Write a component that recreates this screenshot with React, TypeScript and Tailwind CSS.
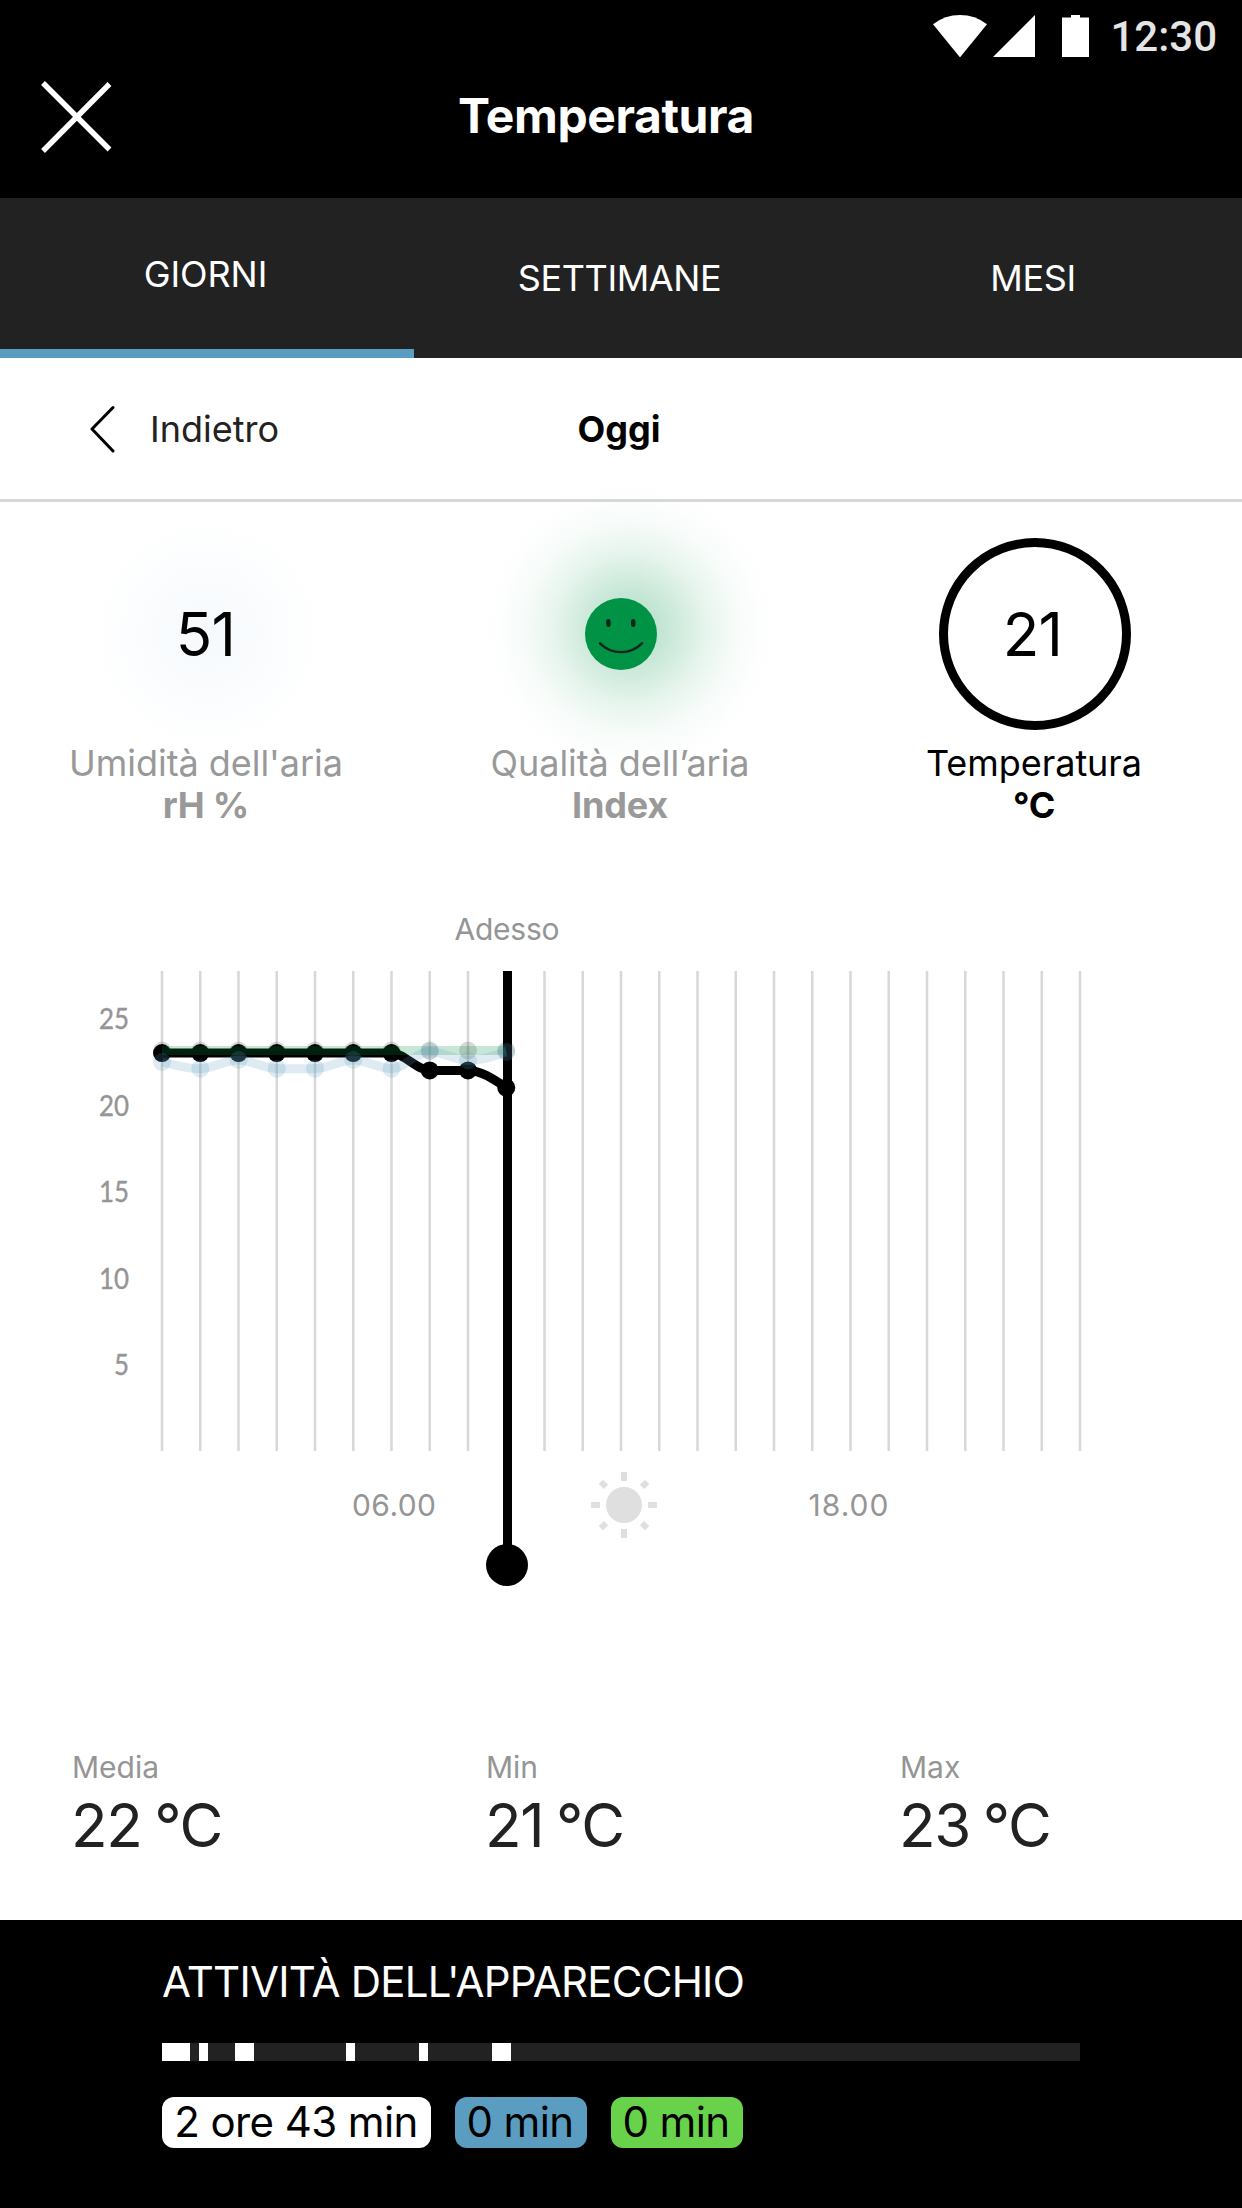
import type { ReactNode } from "react";

type Point = { x: number; y: number };

const HOUR_STEP = 38.25;
const PLOT_LEFT = 162;
const PLOT_TOP = 145;
const PLOT_BOTTOM = 625;
const NOW_X = 507.5;

const hourX = (hour: number) => PLOT_LEFT + hour * HOUR_STEP;
const tempY = (value: number) => 192.5 + (25 - value) * 17.3;

const temperature = [23, 23, 23, 23, 23, 23, 23, 22, 22, 21].map((v, i) => ({ x: hourX(i), y: tempY(v) }));
const airQuality = Array.from({ length: 10 }, (_, i) => ({ x: hourX(i), y: 224.5 }));
const humidity = [236, 242.7, 234, 242.7, 242.7, 234, 242.7, 225.5, 234.5, 226].map((y, i) => ({ x: hourX(i), y }));

/** Monotone cubic through evenly spaced points, flat at every local extreme. */
function monotonePath(points: Point[]) {
  const slope = points.map((p, i) => {
    if (i === 0 || i === points.length - 1) return null;
    const before = (p.y - points[i - 1].y) / HOUR_STEP;
    const after = (points[i + 1].y - p.y) / HOUR_STEP;
    if (before * after <= 0) return 0;
    return (2 * before * after) / (before + after);
  });
  let d = `M${points[0].x},${points[0].y}`;
  for (let i = 1; i < points.length; i++) {
    const a = points[i - 1];
    const b = points[i];
    const secant = (b.y - a.y) / HOUR_STEP;
    const m0 = slope[i - 1] ?? (3 * secant - (slope[i] ?? secant)) / 2;
    const m1 = slope[i] ?? (3 * secant - m0) / 2;
    const k = HOUR_STEP / 3;
    d += `C${a.x + k},${a.y + m0 * k} ${b.x - k},${b.y - m1 * k} ${b.x},${b.y}`;
  }
  return d;
}

function StatusBar() {
  return (
    <div className="flex h-[72px] items-center justify-end pr-[25px]">
      <svg width="156" height="42" viewBox="0 0 156 42" fill="#fff" aria-hidden>
        <path d="M0 9.2Q12 0 27 0T54 9.2L27 42.4z" />
        <path d="M60 42L102 0v42z" />
        <path d="M129 2.5h9V0h9v2.5h9V42h-27z" />
      </svg>
      <span className="ml-[21px] pt-[2px] font-[Roboto,sans-serif] text-[42px] font-medium leading-[48px] text-[#e5e5e5]">
        12:30
      </span>
    </div>
  );
}

function Header() {
  return (
    <header className="h-[198px] bg-black text-white">
      <StatusBar />
      <div className="flex h-[88px] items-center pl-[40px] pr-[142px]">
        <button type="button" aria-label="Chiudi">
          <svg width="72" height="74" viewBox="0 0 72 74" fill="none" aria-hidden>
            <path d="M3 4L69.500 70.500M69.500 5L3 72" stroke="#fff" strokeWidth="5.4" />
          </svg>
        </button>
        <h1 className="flex-1 text-center text-[48px] font-bold leading-[58px] tracking-[-0.4px]">Temperatura</h1>
      </div>
    </header>
  );
}

function Tabs() {
  return (
    <nav className="grid h-[160px] grid-cols-3 bg-[#222] text-[36px] tracking-[-0.4px] text-white">
      <button type="button" className="border-b-[9px] border-[#5b9dc0] pr-[3px] tracking-[-0.1px]">
        GIORNI
      </button>
      <button type="button" className="pr-[3px]">
        SETTIMANE
      </button>
      <button type="button" className="pr-[4px]">
        MESI
      </button>
    </nav>
  );
}

function DayPicker() {
  return (
    <div className="grid h-[144px] grid-cols-3 items-center border-b-[3px] border-[#d8d8d8] text-[36px]">
      <button type="button" className="flex items-center pl-[89px] text-[#222]">
        <svg width="26" height="48" viewBox="0 0 26 48" fill="none" aria-hidden>
          <path d="M24 2.5L3 24l21 22" stroke="#000" strokeWidth="3" strokeLinecap="round" strokeLinejoin="round" />
        </svg>
        <span className="ml-[35px]">Indietro</span>
      </button>
      <p className="pr-[4px] text-center font-bold">Oggi</p>
      <span />
    </div>
  );
}

function Smiley() {
  return (
    <svg width="72" height="72" viewBox="0 0 72 72" fill="none" aria-hidden className="relative">
      <circle cx="36" cy="36" r="36" fill="#009345" />
      <path d="M23.4 23.2v3.6M48.2 23.2v3.6" stroke="#12251a" strokeWidth="4.4" strokeLinecap="round" />
      <path d="M15 45.3C26.5 57 45.5 57 57 45.3" stroke="#12251a" strokeWidth="2.4" strokeLinecap="round" />
    </svg>
  );
}

type GaugeProps = { label: string; unit: string; active?: boolean; glow?: ReactNode; children: ReactNode };

function Gauge({ label, unit, active, glow, children }: GaugeProps) {
  return (
    <div className={active ? "flex flex-col items-center text-black" : "flex flex-col items-center text-[#999]"}>
      <div
        className={
          active
            ? "flex size-[192px] items-center justify-center rounded-full border-[9px] border-black"
            : "relative flex size-[192px] items-center justify-center"
        }
      >
        {glow}
        {children}
      </div>
      <p className="relative mt-[12px] pr-[2px] text-[36px] leading-[42px] tracking-[-0.05px]">{label}</p>
      <p className="relative pr-[2px] text-[36px] font-bold leading-[42px] tracking-[-0.2px]">{unit}</p>
    </div>
  );
}

function Gauges() {
  return (
    <section className="grid grid-cols-3 pt-[36px]">
      <Gauge
        label="Umidità dell'aria"
        unit="rH %"
        glow={
          <div className="absolute -inset-[24px] bg-[radial-gradient(closest-side,rgba(91,157,210,0.055)_10%,rgba(91,157,210,0.03)_45%,rgba(91,157,210,0.01)_75%,rgba(91,157,210,0))]" />
        }
      >
        <span className="relative pr-[3px] text-[60px] leading-[74px] tracking-[-0.8px] text-black">51</span>
      </Gauge>
      <Gauge
        label="Qualità dell’aria"
        unit="Index"
        glow={
          <div className="absolute -bottom-[46px] -left-[43px] -right-[61px] -top-[58px] bg-[radial-gradient(closest-side,rgba(0,147,69,0.27)_12%,rgba(0,147,69,0.19)_32%,rgba(0,147,69,0.1)_50%,rgba(0,147,69,0.035)_70%,rgba(0,147,69,0.01)_85%,rgba(0,147,69,0))]" />
        }
      >
        <Smiley />
      </Gauge>
      <Gauge label="Temperatura" unit="°C" active>
        <span className="pr-[5px] text-[60px] leading-[74px] tracking-[-0.8px]">21</span>
      </Gauge>
    </section>
  );
}

function Sun({ x, y }: Point) {
  return (
    <g transform={`translate(${x} ${y})`} fill="#dfdfdf">
      <circle r="18" />
      {[0, 90, 180, 270].map((deg) => (
        <rect key={deg} x="-3" y="-33" width="6" height="9" transform={`rotate(${deg})`} />
      ))}
      {[45, 135, 225, 315].map((deg) => (
        <rect key={deg} x="-3" y="-32.7" width="6" height="7.2" transform={`rotate(${deg})`} />
      ))}
    </g>
  );
}

function Chart() {
  return (
    <svg width="1242" height="800" viewBox="0 0 1242 800" className="block" role="img" aria-label="Temperatura oggi">
      <g stroke="#d8d8d8" strokeWidth="2.5">
        {Array.from({ length: 25 }, (_, hour) => (
          <path key={hour} d={`M${hourX(hour)} ${PLOT_TOP}V${PLOT_BOTTOM}`} />
        ))}
      </g>

      <g
        fill="#959595"
        stroke="#959595"
        strokeWidth="0.4"
        className="font-[Lato,sans-serif] text-[29px]"
        textAnchor="end"
      >
        {[25, 20, 15, 10, 5].map((value) => (
          <text
            key={value}
            x="129"
            y={tempY(value) + 10.9}
            textLength={value > 9 ? 30 : 15}
            lengthAdjust="spacingAndGlyphs"
          >
            {value}
          </text>
        ))}
      </g>
      <g fill="#959595" className="text-[30px]">
        <text x="454.5" y="114" textLength="105">Adesso</text>
        <text x="352" y="689.5" textLength="84">06.00</text>
        <text x="808.5" y="689.5" textLength="80">18.00</text>
      </g>

      <path d={monotonePath(temperature)} fill="none" stroke="#000" strokeWidth="9" />
      {temperature.map((p) => (
        <circle key={p.x} cx={p.x} cy={p.y} r="9" />
      ))}
      <path d={`M${NOW_X} ${PLOT_TOP}V740`} stroke="#000" strokeWidth="9" />
      <circle cx="507" cy="739" r="21" />

      {airQuality.map((p) => (
        <circle key={p.x} cx={p.x} cy={p.y} r="9" opacity="0.15" />
      ))}
      <path d={monotonePath(airQuality)} fill="none" stroke="#009345" strokeWidth="9" opacity="0.22" />
      <path d={monotonePath(humidity)} fill="none" stroke="#5b9dc0" strokeWidth="9" opacity="0.2" />
      {humidity.map((p) => (
        <circle key={p.x} cx={p.x} cy={p.y} r="9" fill="#5b9dc0" opacity="0.2" />
      ))}

      <Sun x={624} y={679} />
    </svg>
  );
}

const stats = [
  { label: "Media", value: "22 °C" },
  { label: "Min", value: "21 °C" },
  { label: "Max", value: "23 °C" },
];

function Stats() {
  return (
    <dl className="grid grid-cols-3 pb-[56px] pt-[123px]">
      {stats.map((stat) => (
        <div key={stat.label} className="pl-[72px]">
          <dt className="text-[30px] leading-[37px] text-[#959595]">{stat.label}</dt>
          <dd className="-ml-px text-[60px] leading-[78px] tracking-[-1.3px] text-[#222] [word-spacing:-3px]">
            {stat.value}
          </dd>
        </div>
      ))}
    </dl>
  );
}

// Alternating on/off stretches since midnight, starting with "on".
const activity = [28, 9, 9, 27, 19, 92, 9, 64, 9, 64, 19];

function Activity() {
  return (
    <footer className="h-[288px] bg-black px-[162px] pt-[38px] text-[42px]">
      <h2 className="leading-[48px] tracking-[-0.75px] text-white">ATTIVITÀ DELL'APPARECCHIO</h2>
      <div className="mt-[37px] flex h-[18px] bg-[#222]">
        {activity.map((width, i) => (
          <span key={i} className={i % 2 === 0 ? "bg-white" : ""} style={{ width }} />
        ))}
      </div>
      <div className="mt-[36px] flex gap-[24px] leading-[50px] tracking-[-0.6px] text-black">
        <span className="h-[51px] w-[269px] rounded-[12px] bg-white pr-px text-center">2 ore 43 min</span>
        <span className="h-[51px] w-[132px] rounded-[12px] bg-[#5b9dc0] pr-[2px] text-center">0 min</span>
        <span className="h-[51px] w-[132px] rounded-[12px] bg-[#69d24b] pr-[2px] text-center">0 min</span>
      </div>
    </footer>
  );
}

export default function App() {
  return (
    <div className="min-h-[2208px] w-[1242px] overflow-hidden bg-white font-[Inter,sans-serif]">
      <Header />
      <Tabs />
      <DayPicker />
      <Gauges />
      <Chart />
      <Stats />
      <Activity />
    </div>
  );
}
